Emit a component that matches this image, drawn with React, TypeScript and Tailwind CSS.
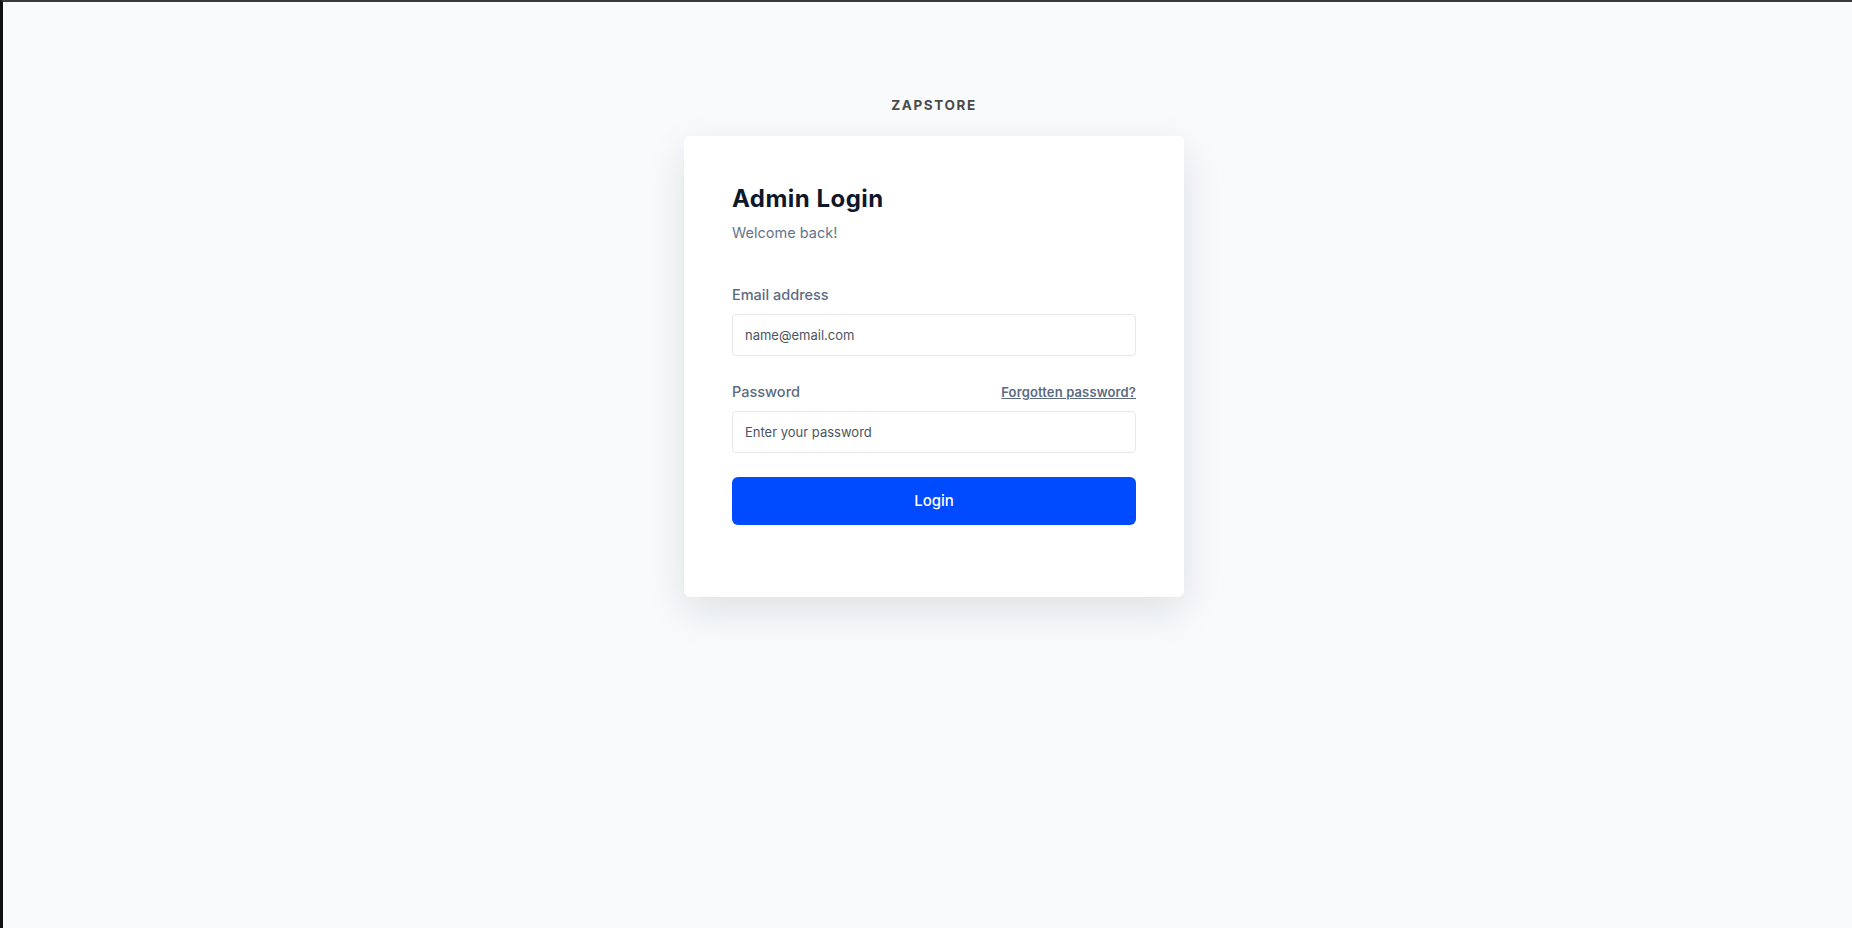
const App = () => {
  return (
    <div className="min-h-screen bg-[#f8fafc] border-l-[3px] border-l-[#111111] border-t-2 border-t-[#3a3a3a] flex flex-col items-center pt-[93px] pl-[13px] font-['Inter',sans-serif]">
      <div className="text-[13.5px] leading-5 font-bold tracking-[0.12em] text-[#4a4a4a]">ZAPSTORE</div>
      <div className="mt-[21px] w-[500px] rounded-md bg-white px-12 pt-12 pb-[72px] shadow-[0_14px_40px_rgba(15,23,42,0.11)]">
        <h1 className="text-2xl leading-[30px] font-bold tracking-[0.02em] text-[#0f172a]">Admin Login</h1>
        <p className="mt-2 text-[14.5px] leading-[22px] text-[#64748b]">Welcome back!</p>

        <form className="mt-[41px]" onSubmit={(e) => e.preventDefault()}>
          <label className="block mb-[9px] text-[14.5px] leading-5 font-medium text-[#5b6b82]">Email address</label>
          <input
            type="email"
            placeholder="name@email.com"
            className="block w-full h-[42px] px-[12px] rounded border border-[#e5e7eb] text-[13px] text-[#4b5563] placeholder:text-[#4b5563] outline-none"
          />

          <div className="mt-[26px] mb-[9px] flex items-center justify-between">
            <label className="text-[14.5px] leading-5 font-medium text-[#5b6b82]">Password</label>
            <a href="#" className="text-[13px] leading-5 font-semibold tracking-[0.01em] text-[#5b6b82] underline">
              Forgotten password?
            </a>
          </div>
          <input
            type="password"
            placeholder="Enter your password"
            className="block w-full h-[42px] px-[12px] rounded border border-[#e5e7eb] text-[13px] text-[#4b5563] placeholder:text-[#4b5563] outline-none"
          />

          <button
            type="submit"
            className="mt-6 w-full h-12 rounded-md bg-[#004bff] text-[15px] font-medium text-white"
          >
            Login
          </button>
        </form>
      </div>
    </div>
  );
};

export default App;
